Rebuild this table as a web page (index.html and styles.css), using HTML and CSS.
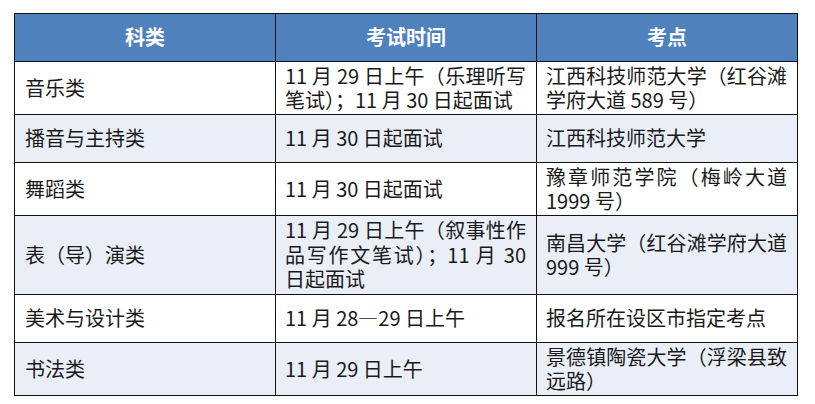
FILE: index.html
```html
<!DOCTYPE html>
<html lang="zh-CN">
<head>
<meta charset="utf-8">
<title>考试时间与考点</title>
<link rel="stylesheet" href="styles.css">
</head>
<body>
<table class="exam">
  <colgroup><col class="c"><col class="c"><col class="c"></colgroup>
  <thead>
    <tr class="head"><th>科类</th><th>考试时间</th><th>考点</th></tr>
  </thead>
  <tbody>
    <tr class="r53">
      <td>音乐类</td>
      <td><span class="jl">11 月 29 日上午（乐理听写</span><span class="ln">笔试）；11 月 30 日起面试</span></td>
      <td><span class="jl">江西科技师范大学（红谷滩</span><span class="ln">学府大道 589 号）</span></td>
    </tr>
    <tr class="r48 alt">
      <td>播音与主持类</td>
      <td>11 月 30 日起面试</td>
      <td>江西科技师范大学</td>
    </tr>
    <tr class="r53">
      <td>舞蹈类</td>
      <td>11 月 30 日起面试</td>
      <td><span class="jl">豫章师范学院（梅岭大道</span><span class="ln">1999 号）</span></td>
    </tr>
    <tr class="r79 alt">
      <td>表（导）演类</td>
      <td><span class="jl">11 月 29 日上午（叙事性作</span><span class="jl">品写作文笔试）；11 月 30</span><span class="ln">日起面试</span></td>
      <td><span class="jl">南昌大学（红谷滩学府大道</span><span class="ln">999 号）</span></td>
    </tr>
    <tr class="r48">
      <td>美术与设计类</td>
      <td>11 月 28—29 日上午</td>
      <td>报名所在设区市指定考点</td>
    </tr>
    <tr class="r53 alt">
      <td>书法类</td>
      <td>11 月 29 日上午</td>
      <td><span class="jl">景德镇陶瓷大学（浮梁县致</span><span class="ln">远路）</span></td>
    </tr>
  </tbody>
</table>
</body>
</html>
```
FILE: styles.css
```css
html, body {
  margin: 0;
  padding: 0;
  background: #ffffff;
}
body {
  padding: 13px 0 0 14px;
  font-family: "Noto Sans CJK SC", sans-serif;
  color: #1a1a1a;
}
.exam {
  border-collapse: collapse;
  table-layout: fixed;
  width: 784px;
  font-size: 20px;
  line-height: 24.5px;
}
.exam th, .exam td {
  border: 1.5px solid #111;
  padding: 0 10px 0 10px;
  vertical-align: middle;
  text-align: left;
  font-weight: normal;
  white-space: nowrap;
}
.exam td + td {
  padding-left: 9px;
}
.head {
  height: 48px;
  background: #4f81bd;
}
.exam th {
  color: #ffffff;
  text-align: center;
  font-weight: bold;
}
.r48 { height: 48px; }
.r53 { height: 53px; }
.r79 { height: 79px; }
.alt { background: #e9eef7; }
.jl {
  display: block;
  text-align: justify;
  text-align-last: justify;
}
.ln {
  display: block;
}
```
